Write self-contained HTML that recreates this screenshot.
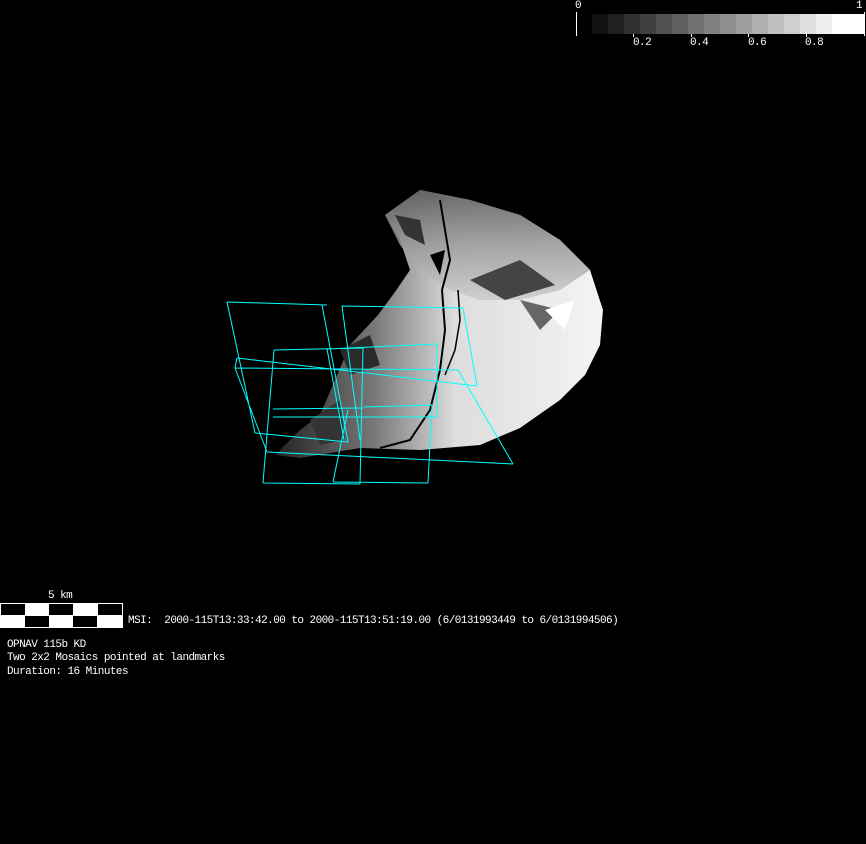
<!DOCTYPE html>
<html><head><meta charset="utf-8"><style>
html,body{margin:0;padding:0;background:#000;}
body{width:866px;height:844px;position:relative;overflow:hidden;font-family:"Liberation Mono","DejaVu Sans Mono",monospace;font-size:11px;letter-spacing:-0.55px;color:#fff;}
.t{position:absolute;white-space:pre;line-height:13px;}
</style></head><body>
<svg width="866" height="844" style="position:absolute;left:0;top:0">
<defs>
<linearGradient id="g1" x1="0" y1="0" x2="1" y2="0">
<stop offset="0" stop-color="#222"/><stop offset="0.3" stop-color="#777"/><stop offset="0.55" stop-color="#ddd"/><stop offset="1" stop-color="#f4f4f4"/>
</linearGradient>
<linearGradient id="g2" x1="0" y1="0" x2="0" y2="1">
<stop offset="0" stop-color="#555"/><stop offset="0.5" stop-color="#999"/><stop offset="1" stop-color="#ccc"/>
</linearGradient>
</defs>
<g>
<rect x="592" y="14" width="16" height="20" fill="#111"/>
<rect x="608" y="14" width="16" height="20" fill="#202020"/>
<rect x="624" y="14" width="16" height="20" fill="#303030"/>
<rect x="640" y="14" width="16" height="20" fill="#404040"/>
<rect x="656" y="14" width="16" height="20" fill="#505050"/>
<rect x="672" y="14" width="16" height="20" fill="#606060"/>
<rect x="688" y="14" width="16" height="20" fill="#707070"/>
<rect x="704" y="14" width="16" height="20" fill="#808080"/>
<rect x="720" y="14" width="16" height="20" fill="#8f8f8f"/>
<rect x="736" y="14" width="16" height="20" fill="#9f9f9f"/>
<rect x="752" y="14" width="16" height="20" fill="#afafaf"/>
<rect x="768" y="14" width="16" height="20" fill="#bfbfbf"/>
<rect x="784" y="14" width="16" height="20" fill="#cfcfcf"/>
<rect x="800" y="14" width="16" height="20" fill="#dfdfdf"/>
<rect x="816" y="14" width="16" height="20" fill="#efefef"/>
<rect x="832" y="14" width="32" height="20" fill="#fff"/>
<rect x="576" y="12" width="1" height="24" fill="#fff"/>
<rect x="864" y="12" width="1" height="24" fill="#fff"/>
<rect x="633" y="34" width="1" height="3" fill="#fff"/>
<rect x="691" y="34" width="1" height="3" fill="#fff"/>
<rect x="748" y="34" width="1" height="3" fill="#fff"/>
<rect x="806" y="34" width="1" height="3" fill="#fff"/>
</g>
<polygon points="275,455 300,430 320,415 335,380 350,345 378,315 395,292 410,270 400,240 385,215 420,190 470,200 520,215 560,240 590,270 603,310 600,345 585,375 560,400 520,428 480,445 420,450 360,448 300,458" fill="url(#g1)"/>
<polygon points="385,215 420,190 470,200 520,215 560,240 590,270 560,290 520,300 480,300 450,290 420,270 400,245" fill="url(#g2)" opacity="0.85"/>
<polygon points="395,215 420,220 425,245 405,235" fill="#333"/>
<polygon points="430,255 445,250 440,275" fill="#000"/>
<polygon points="470,280 520,260 555,285 505,300" fill="#444"/>
<polygon points="520,300 560,310 540,330" fill="#666"/>
<polygon points="340,350 370,335 380,365 350,375" fill="#2a2a2a"/>
<polygon points="310,420 340,400 345,440 320,445" fill="#333"/>
<polygon points="545,310 575,300 565,330" fill="#fff"/>
<polyline points="440,200 445,230 450,260 442,290 445,330 440,370 430,410 410,440 380,448" fill="none" stroke="#000" stroke-width="2"/>
<polyline points="458,290 460,320 455,350 445,375" fill="none" stroke="#000" stroke-width="1.5"/>
<g fill="none" stroke="#00ffff" stroke-width="1">
<path d="M227,302L327,305 M227,302L255,433 M255,433L348,442 M322,305L348,442
M342,306L463,308 M463,308L477,386 M237,358L477,386 M237,358L235,368 M235,368L458,370
M458,370L513,464 M267,452L513,464 M235,368L267,452 M342,306L360,440
M274,350L363,348 M363,348L360,484 M263,483L360,484 M274,350L263,483
M327,349L437,344 M437,344L437,417 M273,417L437,417 M273,409L363,408 M327,349L344,440
M364,407L432,405 M432,405L428,483 M333,482L428,483 M333,482L348,410"/>
</g>
<rect x="0" y="603" width="123" height="25" fill="#fff"/>
<rect x="1" y="604" width="24" height="11" fill="#000"/>
<rect x="49" y="604" width="24" height="11" fill="#000"/>
<rect x="98" y="604" width="24" height="11" fill="#000"/>
<rect x="25" y="616" width="24" height="11" fill="#000"/>
<rect x="73" y="616" width="24" height="11" fill="#000"/>
</svg>
<div class="t" style="left:575px;top:0px;">0</div>
<div class="t" style="left:856px;top:0px;">1</div>
<div class="t" style="left:633px;top:37px;">0.2</div>
<div class="t" style="left:690px;top:37px;">0.4</div>
<div class="t" style="left:748px;top:37px;">0.6</div>
<div class="t" style="left:805px;top:37px;">0.8</div>
<div class="t" style="left:48px;top:590px;">5 km</div>
<div class="t" style="left:128px;top:615px;">MSI:  2000-115T13:33:42.00 to 2000-115T13:51:19.00 (6/0131993449 to 6/0131994506)</div>
<div class="t" style="left:7px;top:639px;">OPNAV 115b KD</div>
<div class="t" style="left:7px;top:652px;">Two 2x2 Mosaics pointed at landmarks</div>
<div class="t" style="left:7px;top:666px;">Duration: 16 Minutes</div>
</body></html>
